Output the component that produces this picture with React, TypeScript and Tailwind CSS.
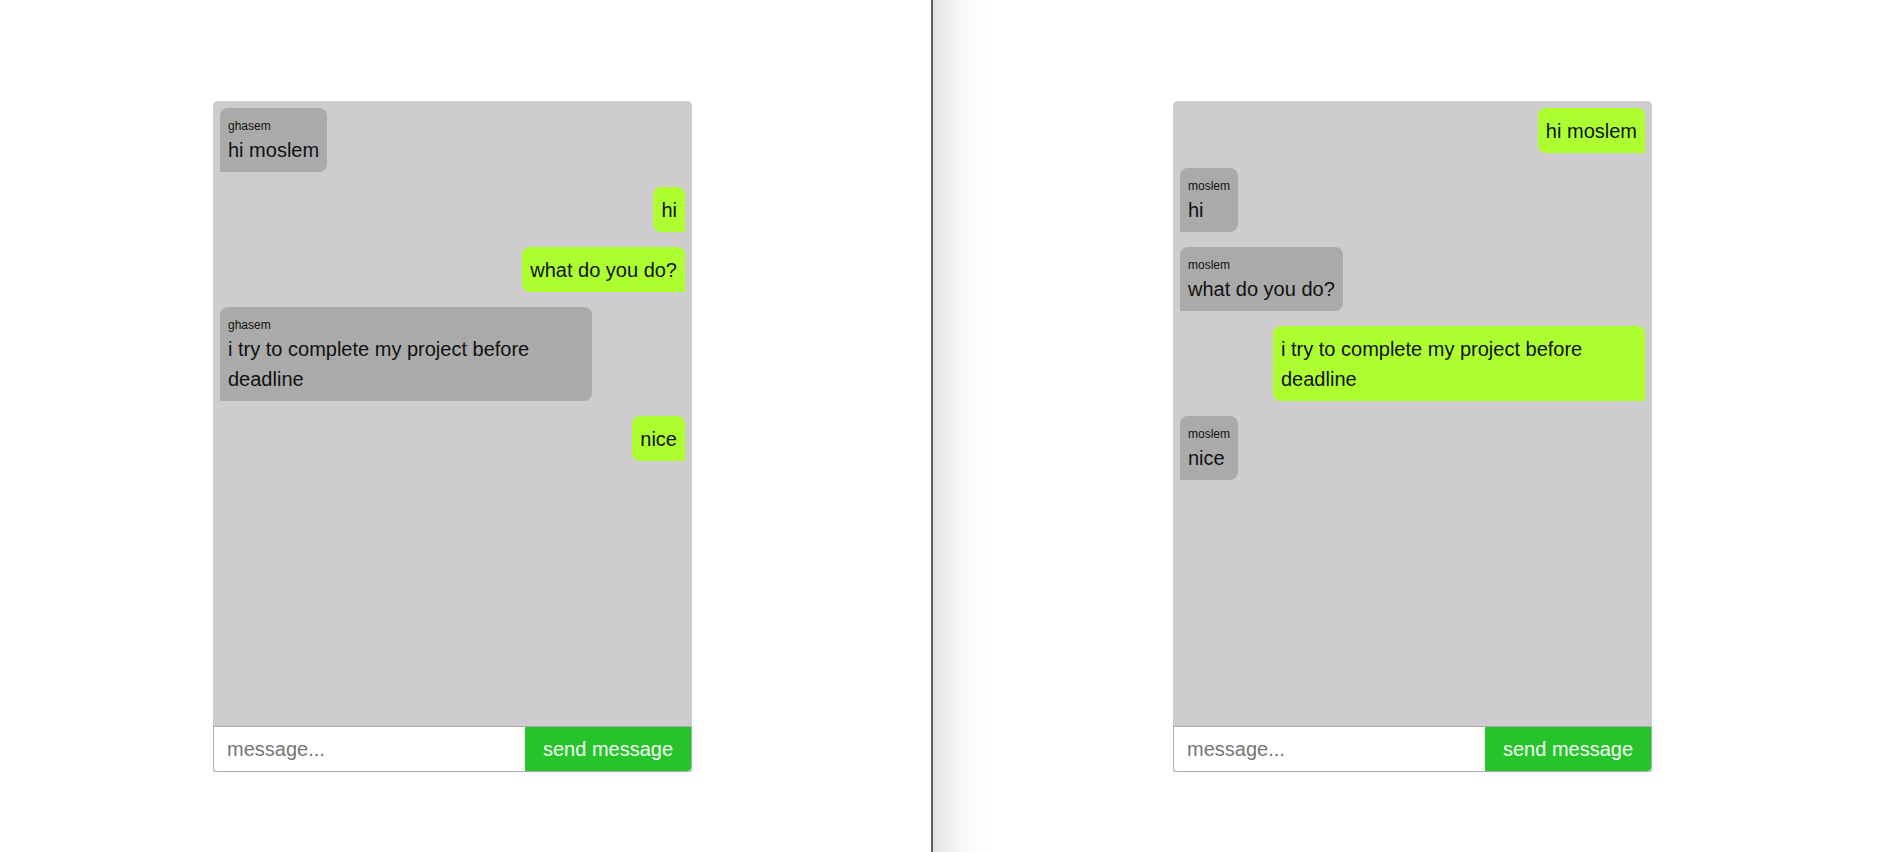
import React from "react";

type Msg = { name?: string; text: string; mine: boolean };

const leftChat: Msg[] = [
  { name: "ghasem", text: "hi moslem", mine: false },
  { text: "hi", mine: true },
  { text: "what do you do?", mine: true },
  { name: "ghasem", text: "i try to complete my project before deadline", mine: false },
  { text: "nice", mine: true },
];

const rightChat: Msg[] = [
  { text: "hi moslem", mine: true },
  { name: "moslem", text: "hi", mine: false },
  { name: "moslem", text: "what do you do?", mine: false },
  { text: "i try to complete my project before deadline", mine: true },
  { name: "moslem", text: "nice", mine: false },
];

function Bubble({ msg }: { msg: Msg }) {
  if (msg.mine) {
    return (
      <div className="self-end max-w-[80%] bg-[#adff2f] rounded-t-[8px] rounded-bl-[8px] px-[8px] py-[7.5px] text-[20px] leading-[30px] text-[#111]">
        {msg.text}
      </div>
    );
  }
  return (
    <div className="self-start max-w-[80%] bg-[#aaaaaa] rounded-t-[8px] rounded-br-[8px] px-[8px] py-[7.5px] text-[#111]">
      <div className="text-[12px] leading-[19px] pt-[1px] -mb-[1px]">{msg.name}</div>
      <div className="text-[20px] leading-[30px]">{msg.text}</div>
    </div>
  );
}

function ChatBox({ messages }: { messages: Msg[] }) {
  return (
    <div className="w-[479px] h-[671px] flex flex-col bg-[#cecccd] rounded-t-[5px]">
      <div className="flex-1 flex flex-col gap-[15px] p-[7px]">
        {messages.map((m, i) => (
          <Bubble key={i} msg={m} />
        ))}
      </div>
      <form
        className="flex h-[46px] border border-[#aaaaaa] rounded-b-[5px] bg-white overflow-hidden"
        onSubmit={(e) => e.preventDefault()}
      >
        <input
          className="flex-1 min-w-0 pl-[13px] text-[20px] outline-none placeholder:text-[#767676] bg-white"
          placeholder="message..."
        />
        <button
          type="submit"
          className="w-[166px] bg-[#28c22b] text-[20px] text-[#f4fff4]"
        >
          send message
        </button>
      </form>
    </div>
  );
}

export default function App() {
  return (
    <div className="flex w-[1890px] h-[852px] bg-white font-['Liberation_Sans',Arial,sans-serif] overflow-hidden">
      <div className="w-[931px] h-full pt-[101px] pl-[213px]">
        <ChatBox messages={leftChat} />
      </div>
      <div className="w-[2px] h-full bg-[#5f5f5f]" />
      <div className="flex-1 h-full pt-[101px] pl-[240px] bg-[linear-gradient(to_right,#e2e2e2,#f6f6f6_25px,#ffffff_55px)]">
        <ChatBox messages={rightChat} />
      </div>
    </div>
  );
}
